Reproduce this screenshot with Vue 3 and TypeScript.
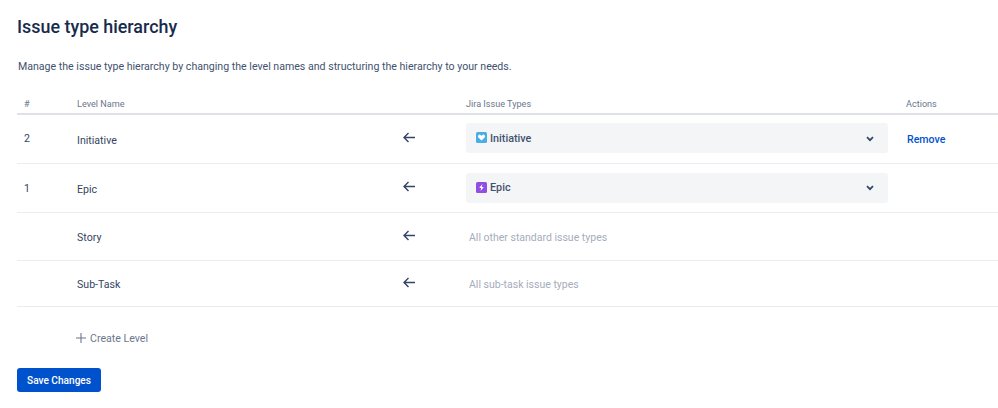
<script setup lang="ts">
interface Level {
  num: string;
  name: string;
  type?: string;
  kind?: 'initiative' | 'epic';
  hint?: string;
  removable?: boolean;
  cls: string;
}
const levels: Level[] = [
  { num: '2', name: 'Initiative', type: 'Initiative', kind: 'initiative', removable: true, cls: 'r1' },
  { num: '1', name: 'Epic', type: 'Epic', kind: 'epic', cls: 'r2' },
  { num: '', name: 'Story', hint: 'All other standard issue types', cls: 'r3' },
  { num: '', name: 'Sub-Task', hint: 'All sub-task issue types', cls: 'r4' },
];
</script>

<template>
  <div class="page">
    <h1 class="title">Issue type hierarchy</h1>
    <p class="desc">Manage the issue type hierarchy by changing the level names and structuring the hierarchy to your needs.</p>

    <div class="table">
      <div class="grid head">
        <span class="num">#</span>
        <span>Level Name</span>
        <span></span>
        <span>Jira Issue Types</span>
        <span class="act">Actions</span>
      </div>
      <div v-for="l in levels" :key="l.name" class="grid row" :class="l.cls">
        <span class="num">{{ l.num }}</span>
        <span class="name">{{ l.name }}</span>
        <svg class="arrow" width="12" height="11" viewBox="0 0 12 11" fill="none" stroke="#344563" stroke-width="1.4">
          <path d="M12 5.5H1.2M5.5 1 1 5.5 5.5 10" />
        </svg>
        <div v-if="l.type" class="select">
          <svg v-if="l.kind === 'initiative'" class="ic" width="11" height="11" viewBox="0 0 11 11">
            <rect width="11" height="11" rx="1.5" fill="#4bade8" />
            <path d="M5.5 8.6 2.4 5.5a1.7 1.7 0 0 1 0-2.3 1.7 1.7 0 0 1 2.4 0l.7.6.7-.6a1.7 1.7 0 0 1 2.4 0 1.7 1.7 0 0 1 0 2.3Z" fill="#fff" />
          </svg>
          <svg v-else class="ic" width="11" height="11" viewBox="0 0 11 11">
            <rect width="11" height="11" rx="1.5" fill="#904ee2" />
            <path d="M6.4 2 3.2 6h2L4.6 9l3.2-4h-2Z" fill="#fff" />
          </svg>
          <span class="type">{{ l.type }}</span>
          <svg class="chev" width="8" height="6" viewBox="0 0 8 6" fill="none" stroke="#344563" stroke-width="1.7">
            <path d="M1 1.2 4 4.2l3-3" />
          </svg>
        </div>
        <span v-else class="hint">{{ l.hint }}</span>
        <span class="act"><a v-if="l.removable" class="remove">Remove</a></span>
      </div>
    </div>

    <div class="create">
      <svg width="10" height="10" viewBox="0 0 10 10" stroke="#6b778c" stroke-width="1.1">
        <path d="M5 0v10M0 5h10" />
      </svg>
      <span>Create Level</span>
    </div>
    <button class="save" type="button">Save Changes</button>
  </div>
</template>

<style>
html, body { background: #fff; }
</style>

<style scoped>
.page {
  width: 998px;
  height: 408px;
  box-sizing: border-box;
  padding: 15px 0 0 17px;
  overflow: hidden;
  font-family: Roboto, "Open Sans", sans-serif;
  color: #172b4d;
}
.title {
  margin: 0;
  font-size: 17.9px;
  line-height: 24px;
  font-weight: 500;
  color: #172b4d;
}
.desc {
  margin: 21px 0 0 1px;
  font-size: 10.6px;
  line-height: 14px;
  color: #42526e;
}
.table { margin-top: 21px; }
.grid {
  display: grid;
  grid-template-columns: 60px 326px 63px 422px 1fr;
  align-items: center;
}
.head {
  height: 18px;
  border-bottom: 2px solid #dfe1e6;
  font-size: 9.1px;
  color: #6b778c;
}
.row {
  box-sizing: border-box;
  border-bottom: 1.5px solid #ebecf0;
  font-size: 10.6px;
  color: #344563;
}
.r1 { height: 49px; }
.r2 { height: 49px; }
.r3 { height: 48px; }
.r4 { height: 46px; }
.num { padding-left: 7px; }
.r1 .num { position: relative; top: -1px; }
.name { position: relative; top: 1px; }
.arrow { margin-top: -3px; }
.select {
  height: 30px;
  display: flex;
  align-items: center;
  background: #f4f5f7;
  border-radius: 3px;
  padding: 0 14px 0 10px;
  margin-top: -2px;
}
.r2 .select { margin-top: -1px; }
.ic { flex: none; margin-top: -1px; }
.type {
  margin-left: 3px;
  font-weight: 500;
  font-size: 10.8px;
  color: #42526e;
}
.chev { margin-left: auto; margin-top: 1px; }
.hint {
  margin: 1px 0 0 3px;
  font-size: 10.5px;
  color: #a5adba;
}
.act { padding-left: 18px; }
.remove {
  margin-left: 1px;
  font-weight: 500;
  font-size: 10.6px;
  color: #0052cc;
}
.create {
  display: flex;
  align-items: center;
  gap: 4px;
  margin: 24px 0 0 59px;
  height: 14px;
  font-size: 10.6px;
  color: #6b778c;
}
.save {
  display: block;
  margin-top: 23px;
  width: 84px;
  height: 24px;
  padding: 0;
  border: 0;
  border-radius: 3px;
  background: #0052cc;
  color: #fff;
  font-family: inherit;
  font-size: 10.1px;
  font-weight: 500;
}
</style>
